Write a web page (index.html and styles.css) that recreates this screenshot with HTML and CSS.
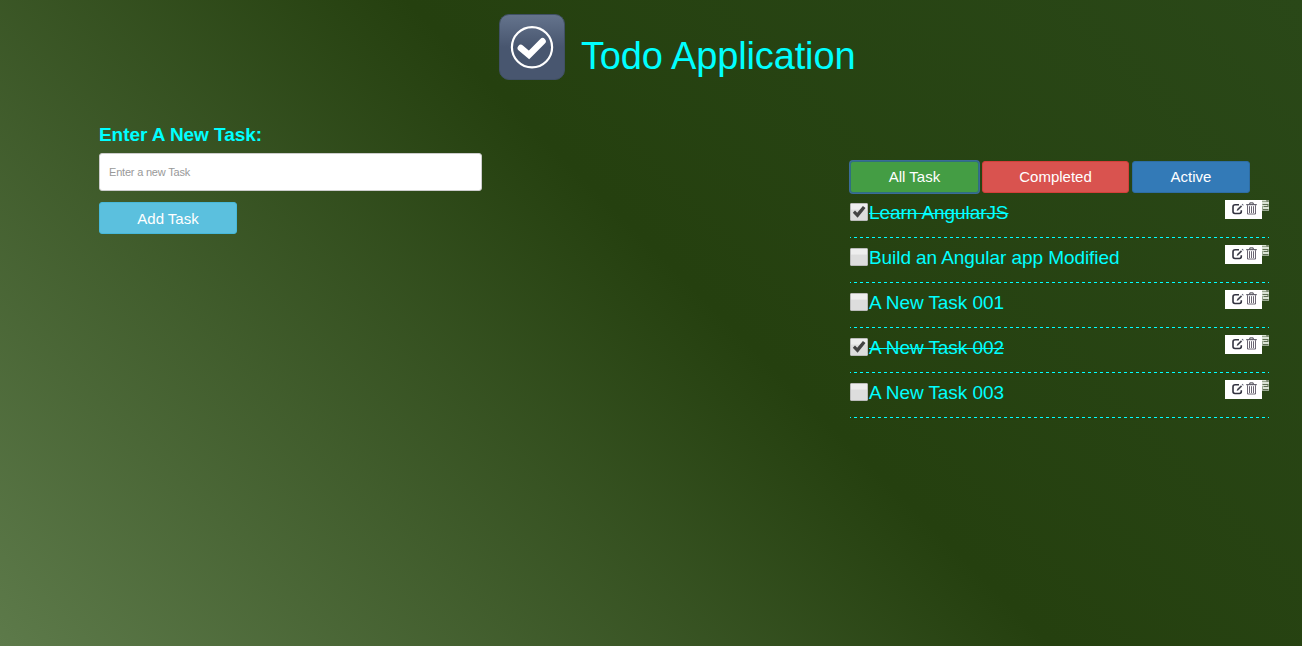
FILE: index.html
```
<!DOCTYPE html>
<html lang="en">
<head>
<meta charset="utf-8">
<title>Todo Application</title>
<link rel="stylesheet" href="styles.css">
</head>
<body>
<svg class="sprite" aria-hidden="true">
  <symbol id="edit" viewBox="0 0 12 12">
    <path d="M7 1.7H3.2Q1 1.7 1 3.7V8.6Q1 10.5 3 10.5H7.4Q9.3 10.5 9.3 8.6V7.2" fill="none" stroke="#333340" stroke-width="1.6"/>
    <path d="M4.7 7.9L5.2 6L9 2.3L10.1 3.4L6.4 7.2Z" fill="#44444f"/>
    <path d="M9.7 1.3L10.3.7L11.7 2L11 2.7Z" fill="#51536a"/>
  </symbol>
  <symbol id="trash" viewBox="0 0 12 13">
    <path d="M3.8 2.2V.9H7.2V2.2M.2 2.7H10.8" fill="none" stroke="#44424f" stroke-width="1"/>
    <path d="M1.5 3.2V12H9.5V3.2M3.5 4.2V11M5.5 4.2V11M7.5 4.2V11" fill="none" stroke="#5b5664" stroke-width=".9"/>
  </symbol>
  <symbol id="grip" viewBox="0 0 7 11">
    <path d="M0 0H7V11H0Z" fill="#9aa891"/>
    <path d="M0 0H4V1H0ZM0 2H7V4H0ZM0 5H5V6H0ZM1 7H7V9H1Z" fill="#dbe3d5"/>
    <path d="M1 4.5H6M2 6.5H6M1 9.5H6M4.5 1H6.5" stroke="#5d6e52"/>
  </symbol>
  <symbol id="tick" viewBox="0 0 18 18">
    <path d="M2.8 9.8L5 7.6L7.2 9.7L12.9 2.9L15.5 5L7.6 14.8Z" fill="#444"/>
  </symbol>
</svg>
<header class="header">
  <svg class="logo" viewBox="0 0 66 66">
    <defs><linearGradient id="tile" x1="0" y1="0" x2="0" y2="1">
      <stop offset="0" stop-color="#65748d"/><stop offset=".5" stop-color="#48566f"/><stop offset="1" stop-color="#48566f"/>
    </linearGradient></defs>
    <rect x=".5" y=".5" width="65" height="65" rx="9.5" fill="url(#tile)" stroke="#405065"/>
    <circle cx="33" cy="33.2" r="20.1" fill="none" stroke="#fff" stroke-width="2.2"/>
    <path d="M21.8 34L30 41L43.6 27.2" fill="none" stroke="#fff" stroke-width="6.4" stroke-linecap="round"/>
  </svg>
  <h1 class="title">Todo Application</h1>
</header>
<main class="main">
  <form class="entry">
    <label class="label" for="task">Enter A New Task:</label>
    <input class="field" id="task" type="text" placeholder="Enter a new Task">
    <button class="btn add" type="button">Add Task</button>
  </form>
  <section class="tasks">
    <div class="filters">
      <button class="btn all" type="button">All Task</button>
      <button class="btn completed" type="button">Completed</button>
      <button class="btn active" type="button">Active</button>
    </div>
    <ul class="list">
      <li class="row done"><span class="box"><svg><use href="#tick"/></svg></span><span class="name">Learn AngularJS</span><span class="tools"><span class="actions"><svg class="edit"><use href="#edit"/></svg><svg class="trash"><use href="#trash"/></svg></span><svg class="grip"><use href="#grip"/></svg></span></li>
      <li class="row"><span class="box"></span><span class="name">Build an Angular app Modified</span><span class="tools"><span class="actions"><svg class="edit"><use href="#edit"/></svg><svg class="trash"><use href="#trash"/></svg></span><svg class="grip"><use href="#grip"/></svg></span></li>
      <li class="row"><span class="box"></span><span class="name">A New Task 001</span><span class="tools"><span class="actions"><svg class="edit"><use href="#edit"/></svg><svg class="trash"><use href="#trash"/></svg></span><svg class="grip"><use href="#grip"/></svg></span></li>
      <li class="row done"><span class="box"><svg><use href="#tick"/></svg></span><span class="name">A New Task 002</span><span class="tools"><span class="actions"><svg class="edit"><use href="#edit"/></svg><svg class="trash"><use href="#trash"/></svg></span><svg class="grip"><use href="#grip"/></svg></span></li>
      <li class="row"><span class="box"></span><span class="name">A New Task 003</span><span class="tools"><span class="actions"><svg class="edit"><use href="#edit"/></svg><svg class="trash"><use href="#trash"/></svg></span><svg class="grip"><use href="#grip"/></svg></span></li>
    </ul>
  </section>
</main>
</body>
</html>
```
FILE: styles.css
```
* { box-sizing: border-box; }
body {
  margin: 0;
  min-height: 646px;
  overflow: hidden;
  font-family: "Liberation Sans", Arial, sans-serif;
  color: #0ff;
  background: linear-gradient(45deg, #5d7a4a 0%, #25400f 54%, #2a4818 100%);
}
.sprite { display: none; }
.header {
  display: flex;
  gap: 16px;
  height: 125px;
  padding: 14px 0 0 499px;
}
.logo { width: 66px; height: 66px; }
.title { margin: 20px 0 0; font-size: 38px; line-height: 44px; font-weight: 400; letter-spacing: -.15px; white-space: nowrap; }
.main { display: flex; justify-content: space-between; padding: 0 33px 0 99px; }
.entry { display: flex; flex-direction: column; align-items: flex-start; width: 383px; }
.label { font-size: 19px; line-height: 20px; font-weight: 700; letter-spacing: -.06px; margin-bottom: 8px; }
.field {
  width: 383px;
  height: 38px;
  margin-bottom: 11px;
  padding: 0 9px;
  border: 1px solid #ccc;
  border-radius: 3px;
  font: 11px "Liberation Sans", Arial, sans-serif;
  letter-spacing: -.2px;
}
.field::placeholder { color: #999; opacity: 1; }
.btn {
  height: 32px;
  padding: 0;
  border: 1px solid;
  border-radius: 3px;
  color: #fff;
  font: 15px "Liberation Sans", Arial, sans-serif;
}
.add { width: 138px; background: #5bc0de; border-color: #46b8da; }
.tasks { width: 420px; margin-top: 36px; }
.filters { display: flex; gap: 3px; padding-left: 1px; }
.filters .btn { padding-bottom: 2px; }
.all { width: 129px; background: #449d44; border-color: #2f6f80; box-shadow: 0 0 0 1px #3b6b98; }
.completed { width: 147px; background: #d9534f; border-color: #d43f3a; }
.active { width: 118px; background: #337ab7; border-color: #2e6da4; }
.list { list-style: none; margin: 0; padding: 0 0 0 1px; }
.row {
  display: flex;
  height: 45px;
  padding-top: 7px;
  background: repeating-linear-gradient(90deg, #0ff 0 3px, transparent 3px 6px) -2px bottom / 422px 1px no-repeat;
}
.box {
  width: 18px;
  height: 18px;
  margin: 3px 1px 0 0;
  border: 1px solid #bbb;
  border-radius: 1px;
  background: linear-gradient(#eee 30%, #ddd 40%);
}
.box svg { display: block; width: 18px; height: 18px; margin: -1px; }
.name { font-size: 19px; line-height: 26px; letter-spacing: -.07px; }
.done .name { text-decoration: line-through; text-decoration-thickness: 1px; }
.tools { display: flex; align-items: flex-start; margin-left: auto; }
.actions { display: flex; width: 37px; height: 19px; padding: 2px 0 0 7px; background: #fff; }
.edit { width: 12px; height: 12px; margin-top: 1px; }
.trash { width: 12px; height: 13px; margin-left: 2px; }
.grip { width: 7px; height: 11px; }
```
